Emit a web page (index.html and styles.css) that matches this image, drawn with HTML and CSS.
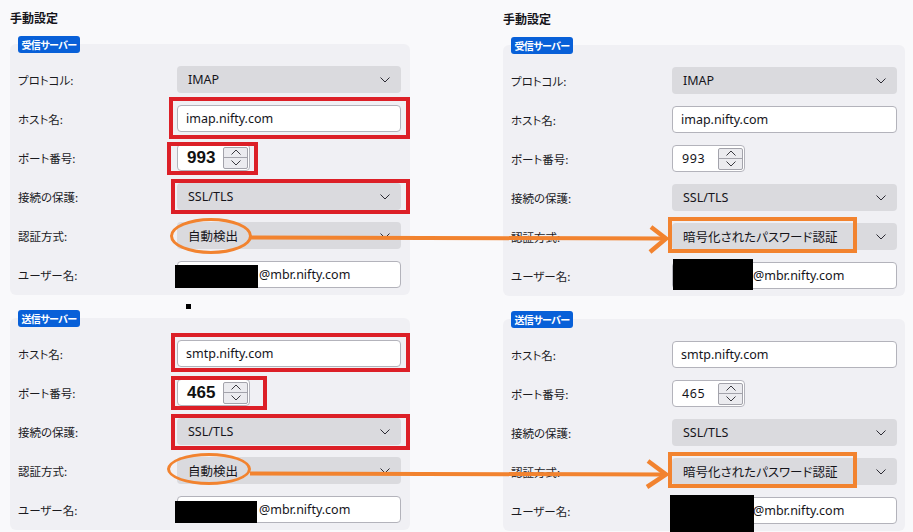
FILE: index.html
```html
<!DOCTYPE html>
<html lang="ja">
<head>
<meta charset="utf-8">
<title>手動設定</title>
<link rel="stylesheet" href="styles.css">
</head>
<body>
<div class="page">
  <section class="col col-left">
    <h2 class="title">手動設定</h2>
    <div class="group">
      <span class="badge">受信サーバー</span>
      <div class="panel">
        <div class="row"><span class="label">プロトコル:</span><div class="field select"><span>IMAP</span><svg class="chev" viewBox="0 0 10 6"><path d="M0.5 0.5L5 5L9.5 0.5"/></svg></div></div>
        <div class="row"><span class="label">ホスト名:</span><div class="field input"><span>imap.nifty.com</span><i class="mark mark-host1"></i></div></div>
        <div class="row"><span class="label">ポート番号:</span><div class="field input port"><span class="num-big">993</span><span class="spin"><span class="spin-btn"><svg viewBox="0 0 10 6"><path d="M0.5 5.5L5 1L9.5 5.5"/></svg></span><span class="spin-btn"><svg viewBox="0 0 10 6"><path d="M0.5 0.5L5 5L9.5 0.5"/></svg></span></span><i class="mark mark-port1"></i></div></div>
        <div class="row"><span class="label">接続の保護:</span><div class="field select"><span>SSL/TLS</span><svg class="chev" viewBox="0 0 10 6"><path d="M0.5 0.5L5 5L9.5 0.5"/></svg><i class="mark mark-prot1"></i></div></div>
        <div class="row"><span class="label">認証方式:</span><div class="field select"><span class="cjk">自動検出</span><svg class="chev" viewBox="0 0 10 6"><path d="M0.5 0.5L5 5L9.5 0.5"/></svg><i class="ellipse ellipse-1"></i></div></div>
        <div class="row"><span class="label">ユーザー名:</span><div class="field input user"><span>@mbr.nifty.com</span><i class="redact redact-l1"></i></div></div>
      </div>
    </div>
    <div class="divider"><span class="dot"></span></div>
    <div class="group">
      <span class="badge">送信サーバー</span>
      <div class="panel">
        <div class="row"><span class="label">ホスト名:</span><div class="field input"><span>smtp.nifty.com</span><i class="mark mark-host2"></i></div></div>
        <div class="row"><span class="label">ポート番号:</span><div class="field input port"><span class="num-big">465</span><span class="spin"><span class="spin-btn"><svg viewBox="0 0 10 6"><path d="M0.5 5.5L5 1L9.5 5.5"/></svg></span><span class="spin-btn"><svg viewBox="0 0 10 6"><path d="M0.5 0.5L5 5L9.5 0.5"/></svg></span></span><i class="mark mark-port2"></i></div></div>
        <div class="row"><span class="label">接続の保護:</span><div class="field select"><span>SSL/TLS</span><svg class="chev" viewBox="0 0 10 6"><path d="M0.5 0.5L5 5L9.5 0.5"/></svg><i class="mark mark-prot2"></i></div></div>
        <div class="row"><span class="label">認証方式:</span><div class="field select"><span class="cjk">自動検出</span><svg class="chev" viewBox="0 0 10 6"><path d="M0.5 0.5L5 5L9.5 0.5"/></svg><i class="ellipse ellipse-2"></i></div></div>
        <div class="row"><span class="label">ユーザー名:</span><div class="field input user"><span>@mbr.nifty.com</span><i class="redact redact-l2"></i></div></div>
      </div>
    </div>
  </section>

  <section class="col col-right">
    <h2 class="title">手動設定</h2>
    <div class="group">
      <span class="badge">受信サーバー</span>
      <div class="panel">
        <div class="row"><span class="label">プロトコル:</span><div class="field select"><span>IMAP</span><svg class="chev" viewBox="0 0 10 6"><path d="M0.5 0.5L5 5L9.5 0.5"/></svg></div></div>
        <div class="row"><span class="label">ホスト名:</span><div class="field input"><span>imap.nifty.com</span></div></div>
        <div class="row"><span class="label">ポート番号:</span><div class="field input port"><span class="num">993</span><span class="spin"><span class="spin-btn"><svg viewBox="0 0 10 6"><path d="M0.5 5.5L5 1L9.5 5.5"/></svg></span><span class="spin-btn"><svg viewBox="0 0 10 6"><path d="M0.5 0.5L5 5L9.5 0.5"/></svg></span></span></div></div>
        <div class="row"><span class="label">接続の保護:</span><div class="field select"><span>SSL/TLS</span><svg class="chev" viewBox="0 0 10 6"><path d="M0.5 0.5L5 5L9.5 0.5"/></svg></div></div>
        <div class="row"><span class="label">認証方式:</span><div class="field select"><span class="cjk">暗号化されたパスワード認証</span><svg class="chev" viewBox="0 0 10 6"><path d="M0.5 0.5L5 5L9.5 0.5"/></svg><i class="orect"></i></div></div>
        <div class="row"><span class="label">ユーザー名:</span><div class="field input user"><span>@mbr.nifty.com</span><i class="redact redact-r1"></i></div></div>
      </div>
    </div>
    <div class="divider"></div>
    <div class="group">
      <span class="badge">送信サーバー</span>
      <div class="panel">
        <div class="row"><span class="label">ホスト名:</span><div class="field input"><span>smtp.nifty.com</span></div></div>
        <div class="row"><span class="label">ポート番号:</span><div class="field input port"><span class="num">465</span><span class="spin"><span class="spin-btn"><svg viewBox="0 0 10 6"><path d="M0.5 5.5L5 1L9.5 5.5"/></svg></span><span class="spin-btn"><svg viewBox="0 0 10 6"><path d="M0.5 0.5L5 5L9.5 0.5"/></svg></span></span></div></div>
        <div class="row"><span class="label">接続の保護:</span><div class="field select"><span>SSL/TLS</span><svg class="chev" viewBox="0 0 10 6"><path d="M0.5 0.5L5 5L9.5 0.5"/></svg></div></div>
        <div class="row"><span class="label">認証方式:</span><div class="field select"><span class="cjk">暗号化されたパスワード認証</span><svg class="chev" viewBox="0 0 10 6"><path d="M0.5 0.5L5 5L9.5 0.5"/></svg><i class="orect"></i></div></div>
        <div class="row"><span class="label">ユーザー名:</span><div class="field input user"><span>@mbr.nifty.com</span><i class="redact redact-r2"></i></div></div>
      </div>
    </div>
  </section>

  <svg class="arrows" viewBox="0 0 913 532" width="913" height="532">
    <path d="M250 237.5L665 238.5"/>
    <path class="head" d="M651 227L666 238.5L650 252"/>
    <path d="M250 473.5L665 474.5"/>
    <path class="head" d="M648 461L666 474.5L647 487"/>
  </svg>
</div>
</body>
</html>
```

FILE: styles.css
```css
html, body {
  margin: 0;
  padding: 0;
  background: #f9f9fb;
}

body {
  font-family: "Noto Sans", "Noto Sans CJK JP", sans-serif;
  color: #15141a;
}

.page {
  position: relative;
  width: 913px;
  height: 532px;
  overflow: hidden;
  box-sizing: border-box;
  padding-left: 10px;
  display: grid;
  grid-template-columns: 400px 402px;
  column-gap: 93px;
  align-items: start;
}

.col-right {
  padding-top: 1px;
}

.title {
  margin: 0 0 10px 0;
  padding-top: 9px;
  font-family: "Noto Sans CJK JP", sans-serif;
  font-size: 12px;
  line-height: 17px;
  font-weight: 700;
  font-feature-settings: "palt";
}

.badge {
  position: relative;
  z-index: 1;
  display: block;
  width: 62px;
  height: 17px;
  margin-left: 8px;
  box-sizing: border-box;
  border-radius: 3px;
  background: #0860d8;
  color: #ffffff;
  font-family: "Noto Sans CJK JP", sans-serif;
  font-size: 10px;
  font-weight: 700;
  line-height: 17px;
  text-align: center;
  letter-spacing: -0.6px;
  font-feature-settings: "palt";
}

.panel {
  margin-top: -9px;
  background: #f0f0f4;
  border-radius: 6px;
  padding: 22px 9px 7px 8px;
  display: flex;
  flex-direction: column;
  gap: 12px;
}

.col-right .panel {
  padding-right: 8px;
}

.row {
  display: grid;
  grid-template-columns: 159px 1fr;
  align-items: center;
}

.col-right .row {
  grid-template-columns: 161px 1fr;
}

.label {
  font-family: "Noto Sans CJK JP", sans-serif;
  font-size: 11.5px;
  line-height: 16px;
  color: #1b1b1f;
  font-feature-settings: "palt";
}

.field {
  position: relative;
  height: 27px;
  box-sizing: border-box;
  border-radius: 4px;
  display: flex;
  align-items: center;
  font-size: 12.5px;
  line-height: 16px;
  color: #15141a;
}

.cjk {
  font-family: "Noto Sans CJK JP", sans-serif;
  font-feature-settings: "palt";
}

.select {
  background: #dadade;
  padding: 0 11px;
  justify-content: space-between;
}

.chev {
  width: 10px;
  height: 6px;
  fill: none;
  stroke: #2b2a33;
  stroke-width: 1;
}

.input {
  background: #ffffff;
  border: 1px solid #b3b3bb;
  padding: 0 8px;
}

.port {
  width: 73px;
  padding: 0 1px 0 9px;
  justify-content: space-between;
}

.num-big {
  font-family: "Liberation Sans", sans-serif;
  font-size: 17px;
  font-weight: 700;
  color: #111111;
}

.num {
  font-family: "Noto Sans", sans-serif;
  font-size: 12.5px;
  letter-spacing: 0.6px;
}

.spin {
  width: 25px;
  height: 22px;
  box-sizing: border-box;
  border: 1px solid #a3a3ab;
  border-radius: 2px;
  background: #ebebef;
  display: flex;
  flex-direction: column;
}

.spin-btn {
  flex: 1;
  display: flex;
  align-items: center;
  justify-content: center;
}

.spin-btn + .spin-btn {
  border-top: 1px solid #a3a3ab;
}

.spin-btn svg {
  width: 10px;
  height: 6px;
  fill: none;
  stroke: #3a3a40;
  stroke-width: 1;
}

.user {
  padding-left: 81px;
}

.col-right .user {
  padding-left: 80px;
}

.divider {
  display: flow-root;
  height: 15px;
}

.dot {
  display: block;
  width: 5px;
  height: 5px;
  margin: 9px 0 0 176px;
  background: #000000;
}

/* annotations drawn over the screenshot */
.mark {
  position: absolute;
  border: 4px solid #dc1f27;
  pointer-events: none;
}

.mark-host1 { left: -9px; right: -10px; top: -9px; bottom: -8px; }
.mark-port1 { left: -11px; right: -9px; top: -3px; bottom: -5px; }
.mark-prot1 { left: -6px; right: -9px; top: -4px; bottom: -4px; }
.mark-host2 { left: -7px; right: -10px; top: -8px; bottom: -6px; }
.mark-port2 { left: -7px; right: -18px; top: -4px; bottom: -5px; }
.mark-prot2 { left: -6px; right: -9px; top: -4px; bottom: -5px; }

.ellipse {
  position: absolute;
  box-sizing: border-box;
  border: 3.5px solid #f2832f;
  border-radius: 50%;
  pointer-events: none;
}

.ellipse-1 { left: -7px; top: -4px; width: 82px; height: 36px; }
.ellipse-2 { left: -10px; top: -4px; width: 84px; height: 32px; }

.orect {
  position: absolute;
  left: -4px;
  top: -6px;
  width: 189px;
  height: 36px;
  box-sizing: border-box;
  border: 4px solid #f2832f;
  pointer-events: none;
}

.redact {
  position: absolute;
  background: #000000;
}

.redact-l1 { left: -3px; top: 3px; width: 83px; height: 23px; }
.redact-l2 { left: -3px; top: 4px; width: 82px; height: 22px; }
.redact-r1 { left: 0px; top: -4px; width: 80px; height: 31px; }
.redact-r2 { left: -3px; top: -3px; width: 84px; height: 40px; }

.arrows {
  position: absolute;
  left: 0;
  top: 0;
  z-index: 5;
  pointer-events: none;
  fill: none;
  stroke: #f2832f;
  stroke-width: 4;
  stroke-linejoin: miter;
}

.arrows .head {
  stroke-width: 4.5;
}
```
